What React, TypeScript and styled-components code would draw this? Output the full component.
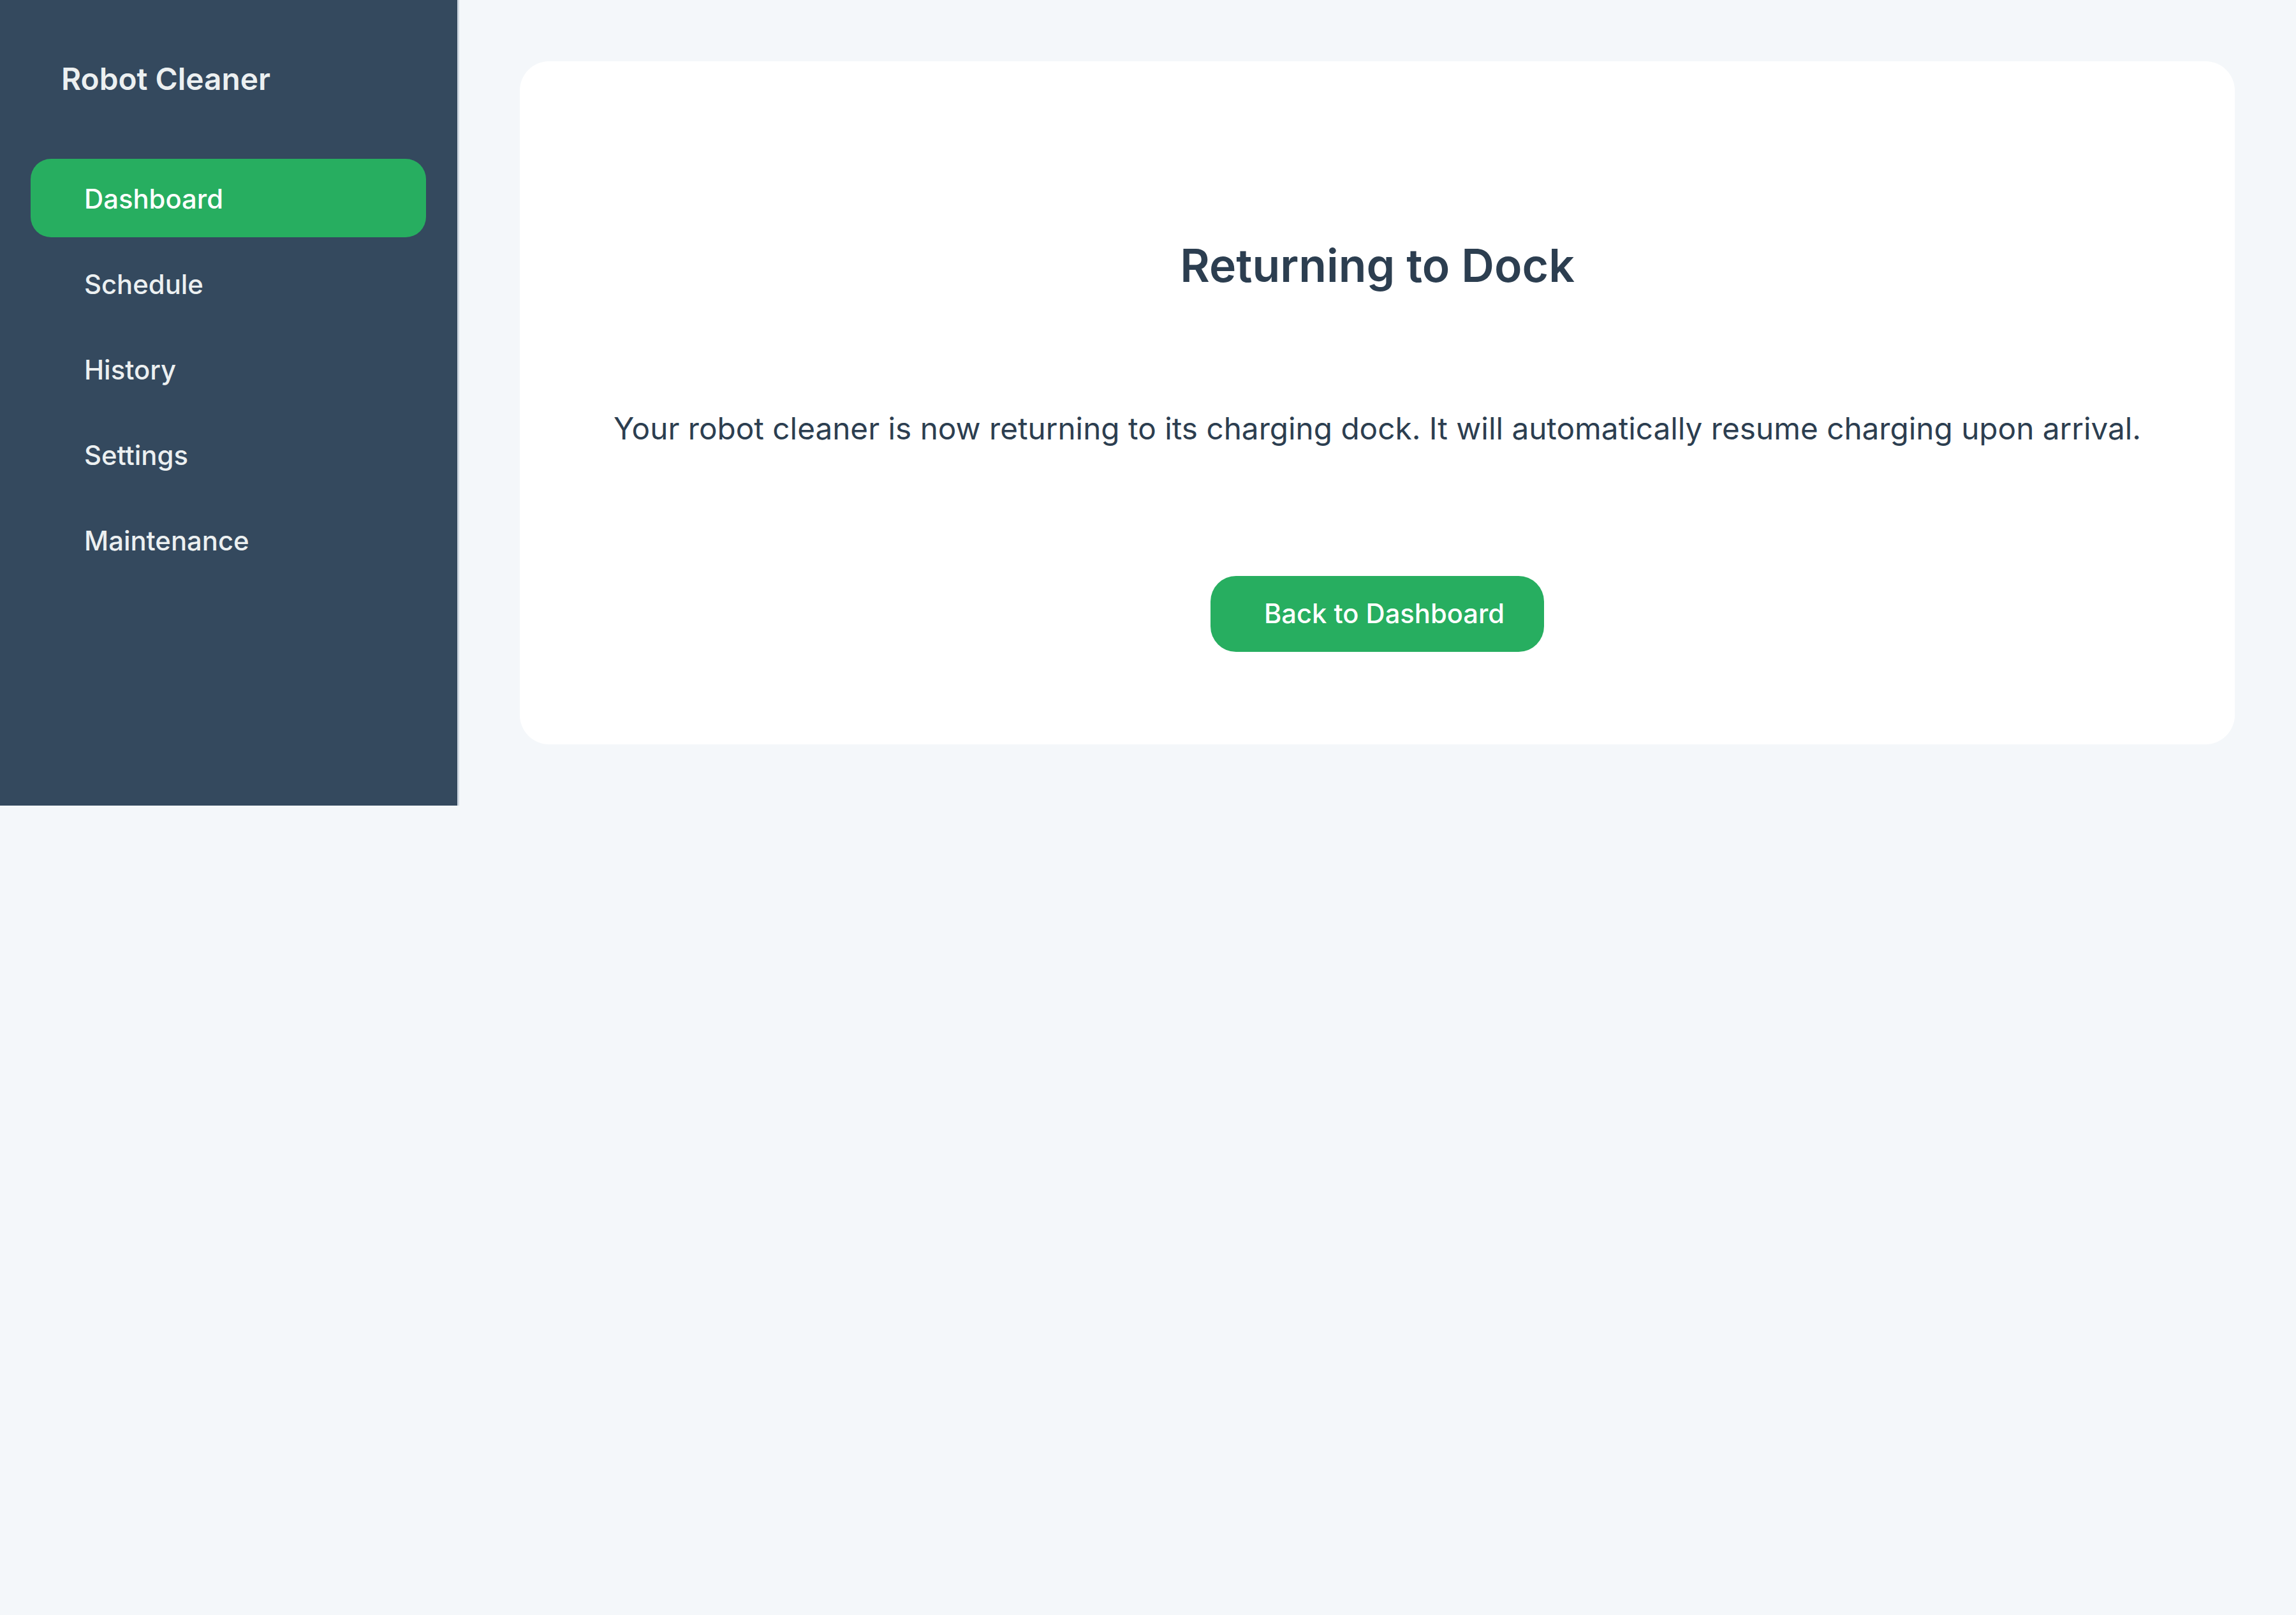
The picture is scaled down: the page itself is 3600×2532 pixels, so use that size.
import React from "react";
import styled, { createGlobalStyle } from "styled-components";

const GlobalStyle = createGlobalStyle`
  html, body {
    margin: 0;
    padding: 0;
    background: #f4f7fa;
    font-family: Inter, "Noto Sans", "Liberation Sans", sans-serif;
  }
  * { box-sizing: border-box; }
`;

const Layout = styled.div`
  display: flex;
  flex-direction: row;
  align-items: stretch;
  width: 100%;
`;

const Sidebar = styled.aside`
  flex: 0 0 720px;
  width: 720px;
  background: #34495e;
  border-right: 3px solid #cfd8e2;
  padding: 95px 49px 0 48px;
  display: flex;
  flex-direction: column;
`;

const Brand = styled.div`
  font-size: 47.8px;
  line-height: 58px;
  font-weight: 600;
  color: #ecf0f1;
  padding-left: 48px;
  margin-bottom: 96px;
`;

const NavList = styled.nav`
  display: flex;
  flex-direction: column;
  gap: 11px;
`;

const NavItem = styled.a<{ $active?: boolean }>`
  display: block;
  padding: 33px 0 29px 84px;
  font-size: 41.8px;
  line-height: 61px;
  font-weight: 500;
  border-radius: 32px;
  color: ${(p) => (p.$active ? "#ffffff" : "#ecf0f1")};
  background: ${(p) => (p.$active ? "#27ae60" : "transparent")};
  text-decoration: none;
  cursor: pointer;
`;

const Main = styled.main`
  flex: 1;
  padding: 96px 96px 96px 95px;
`;

const Card = styled.section`
  background: #ffffff;
  border-radius: 46px;
  padding: 277px 60px 145px;
  display: flex;
  flex-direction: column;
  align-items: center;
  text-align: center;
`;

const Title = styled.h1`
  margin: 0 0 177px;
  font-size: 71.5px;
  line-height: 86px;
  font-weight: 600;
  color: #2c3e50;
`;

const Message = styled.p`
  margin: 0 0 195px;
  font-size: 47.7px;
  line-height: 72px;
  font-weight: 400;
  color: #2c3e50;
`;

const PrimaryButton = styled.button`
  border: none;
  background: #27ae60;
  color: #ffffff;
  font-family: inherit;
  font-size: 41.7px;
  line-height: 61px;
  font-weight: 500;
  height: 119px;
  padding: 0 62px 0 84px;
  border-radius: 40px;
  cursor: pointer;
`;

const navItems = ["Dashboard", "Schedule", "History", "Settings", "Maintenance"];

export default function App() {
  return (
    <>
      <GlobalStyle />
      <Layout>
        <Sidebar>
          <Brand>Robot Cleaner</Brand>
          <NavList>
            {navItems.map((item, i) => (
              <NavItem key={item} $active={i === 0}>
                {item}
              </NavItem>
            ))}
          </NavList>
        </Sidebar>
        <Main>
          <Card>
            <Title>Returning to Dock</Title>
            <Message>
              Your robot cleaner is now returning to its charging dock. It will
              automatically resume charging upon arrival.
            </Message>
            <PrimaryButton>Back to Dashboard</PrimaryButton>
          </Card>
        </Main>
      </Layout>
    </>
  );
}
